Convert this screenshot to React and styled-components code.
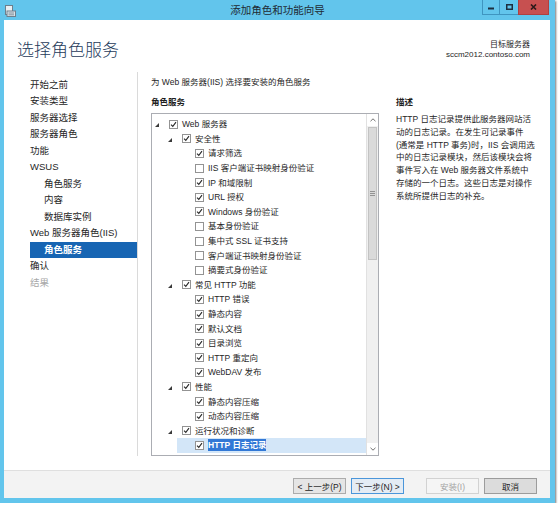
import styled, { createGlobalStyle } from "styled-components";

const GlobalStyle = createGlobalStyle`
  html, body { margin: 0; padding: 0; background: #fff; }
  body {
    font-family: "Liberation Sans", "Noto Sans CJK SC", sans-serif;
    color: #1e1e1e;
  }
`;

const Window = styled.div`
  width: 555px;
  height: 503px;
  box-sizing: border-box;
  background: #62c5ec;
  display: flex;
  flex-direction: column;
  box-shadow: 1px 1px 2px rgba(0, 0, 0, 0.55);
`;

const TitleBar = styled.div`
  height: 20px;
  display: grid;
  grid-template-columns: 1fr auto 1fr;
  align-items: start;
`;

const AppIcon = styled.div`
  margin: 3px 0 0 5px;
  width: 11px;
  height: 12px;
`;

const TitleText = styled.div`
  font-size: 10.5px;
  line-height: 20px;
  color: #1f2a33;
`;

const Captions = styled.div`
  justify-self: end;
  display: flex;
  margin-right: 6px;
`;

const CaptionButton = styled.div`
  width: ${(p) => p.w}px;
  height: 15px;
  box-sizing: border-box;
  display: flex;
  align-items: center;
  justify-content: center;
  background: ${(p) => (p.close ? "#c75050" : "#62c5ec")};
  border: 1px solid ${(p) => (p.close ? "#b04040" : "#3f95c0")};
  border-top: none;
  margin-left: -1px;
`;

const Client = styled.div`
  flex: 1;
  margin: 0 5px 5px 4px;
  background: #fff;
  display: flex;
  flex-direction: column;
  min-height: 0;
`;

const Header = styled.div`
  height: 52px;
  box-sizing: border-box;
  display: flex;
  justify-content: space-between;
  padding: 17px 20px 0 13px;
`;

const PageTitle = styled.div`
  font-family: "Noto Sans CJK SC", sans-serif;
  font-weight: 300;
  font-size: 17px;
  line-height: 24px;
  color: #1e3a5a;
`;

const Target = styled.div`
  text-align: right;
  font-size: 8px;
  line-height: 10px;
  padding-top: 2.5px;
  color: #1e1e1e;
`;

const Body = styled.div`
  flex: 1;
  display: flex;
  padding-bottom: 14px;
  min-height: 0;
`;

const Nav = styled.div`
  width: 134px;
  box-sizing: border-box;
  border-right: 1px solid #dadada;
  padding: 4.75px 0 0 26px;
`;

const NavItem = styled.div`
  height: 16.5px;
  line-height: 16.5px;
  font-size: 9.5px;
  white-space: nowrap;
  padding-left: ${(p) => (p.indent ? 14 : 0)}px;
  background: ${(p) => (p.active ? "#1765b3" : "transparent")};
  color: ${(p) => (p.active ? "#fff" : p.muted ? "#a8a8a8" : "#262626")};
  font-weight: ${(p) => (p.active ? "bold" : "normal")};
`;

const Content = styled.div`
  flex: 1;
  padding: 4px 0 0 13px;
`;

const Subtitle = styled.div`
  font-size: 8.5px;
  line-height: 12px;
  white-space: nowrap;
`;

const Columns = styled.div`
  display: flex;
  margin-top: 8px;
`;

const LeftCol = styled.div`
  width: 228px;
`;

const RightCol = styled.div`
  flex: 1;
  margin-left: 17px;
`;

const Heading = styled.div`
  font-size: 8.5px;
  line-height: 12px;
  font-weight: bold;
  margin-bottom: 5px;
`;

const TreeBox = styled.div`
  height: 343px;
  box-sizing: border-box;
  border: 1px solid #abadb3;
  display: flex;
  background: #fff;
`;

const TreeList = styled.div`
  flex: 1;
  overflow: hidden;
  padding-top: 3px;
`;

const Row = styled.div`
  height: 14.6px;
  display: flex;
  align-items: center;
  margin-left: ${(p) => p.level * 13 - 1}px;
  padding-left: 4px;
  background: ${(p) => (p.selected ? "#d3e6f8" : "transparent")};
`;

const Expander = styled.div`
  width: 14px;
  height: 100%;
  display: flex;
  align-items: center;
  padding-top: 2px;
  box-sizing: border-box;
`;

const Check = styled.div`
  width: 9px;
  height: 9px;
  box-sizing: border-box;
  border: 1px solid #939393;
  background: #fff;
  margin-right: 4px;
  display: flex;
  align-items: center;
  justify-content: center;
`;

const Label = styled.span`
  font-size: 8.5px;
  line-height: 12px;
  white-space: nowrap;
  color: ${(p) => (p.selected ? "#fff" : "#262626")};
  background: ${(p) => (p.selected ? "#3278d6" : "transparent")};
  font-weight: ${(p) => (p.selected ? "bold" : "normal")};
`;

const Scrollbar = styled.div`
  width: 11px;
  border-left: 1px solid #e1e1e1;
  background: #f0f0f0;
  display: flex;
  flex-direction: column;
`;

const ScrollArrow = styled.div`
  height: 12px;
  display: flex;
  align-items: center;
  justify-content: center;
  background: #fff;
`;

const Thumb = styled.div`
  height: 133px;
  margin: 1px 1px 0 1px;
  box-sizing: border-box;
  background: #dadada;
  border: 1px solid #c3c3c3;
  display: flex;
  align-items: center;
  justify-content: center;
`;

const Track = styled.div`
  flex: 1;
`;

const DescLine = styled.div`
  font-size: 8.5px;
  line-height: 12.8px;
  white-space: nowrap;
  color: #262626;
`;

const Footer = styled.div`
  height: 28px;
  box-sizing: border-box;
  border-top: 1px solid #dfdfdf;
  background: #f3f3f3;
  display: flex;
  justify-content: flex-end;
  align-items: flex-start;
  padding: 7px 13px 0 0;
  gap: 5px;
`;

const buttonColors = {
  normal: { bg: "#e5e5e5", border: "#acacac", color: "#1e1e1e" },
  primary: { bg: "#e4ecf4", border: "#4b96da", color: "#1e1e1e" },
  disabled: { bg: "#f5f5f5", border: "#d2d2d2", color: "#a3a3a3" },
  cancel: { bg: "#dcdcdc", border: "#9c9c9c", color: "#1e1e1e" },
};

const Button = styled.div`
  width: 53px;
  height: 16px;
  box-sizing: border-box;
  margin-left: ${(p) => (p.spaced ? 17 : 0)}px;
  display: flex;
  align-items: center;
  justify-content: center;
  font-size: 8.5px;
  white-space: nowrap;
  background: ${(p) => buttonColors[p.variant].bg};
  border: 1px solid ${(p) => buttonColors[p.variant].border};
  color: ${(p) => buttonColors[p.variant].color};
`;

const navItems = [
  { t: "开始之前" },
  { t: "安装类型" },
  { t: "服务器选择" },
  { t: "服务器角色" },
  { t: "功能" },
  { t: "WSUS" },
  { t: "角色服务", indent: true },
  { t: "内容", indent: true },
  { t: "数据库实例", indent: true },
  { t: "Web 服务器角色(IIS)" },
  { t: "角色服务", indent: true, active: true },
  { t: "确认" },
  { t: "结果", muted: true },
];

const tree = [
  [0, true, true, "Web 服务器"],
  [1, true, true, "安全性"],
  [2, false, true, "请求筛选"],
  [2, false, false, "IIS 客户端证书映射身份验证"],
  [2, false, true, "IP 和域限制"],
  [2, false, true, "URL 授权"],
  [2, false, true, "Windows 身份验证"],
  [2, false, false, "基本身份验证"],
  [2, false, false, "集中式 SSL 证书支持"],
  [2, false, false, "客户端证书映射身份验证"],
  [2, false, false, "摘要式身份验证"],
  [1, true, true, "常见 HTTP 功能"],
  [2, false, true, "HTTP 错误"],
  [2, false, true, "静态内容"],
  [2, false, true, "默认文档"],
  [2, false, true, "目录浏览"],
  [2, false, true, "HTTP 重定向"],
  [2, false, true, "WebDAV 发布"],
  [1, true, true, "性能"],
  [2, false, true, "静态内容压缩"],
  [2, false, true, "动态内容压缩"],
  [1, true, true, "运行状况和诊断"],
  [2, false, true, "HTTP 日志记录", true],
];

const description = [
  "HTTP 日志记录提供此服务器网站活",
  "动的日志记录。在发生可记录事件",
  "(通常是 HTTP 事务)时，IIS 会调用选",
  "中的日志记录模块，然后该模块会将",
  "事件写入在 Web 服务器文件系统中",
  "存储的一个日志。这些日志是对操作",
  "系统所提供日志的补充。",
];

const Triangle = () => (
  <svg width="4" height="4" viewBox="0 0 4 4">
    <polygon points="4,0 4,4 0,4" fill="#3a3a3a" />
  </svg>
);

const Tick = () => (
  <svg width="7" height="7" viewBox="0 0 7 7">
    <polyline points="1,3.6 2.8,5.4 6,1.2" fill="none" stroke="#2a2a2a" strokeWidth="1.1" />
  </svg>
);

const Chevron = ({ down }) => (
  <svg width="6" height="4" viewBox="0 0 6 4">
    <polyline
      points={down ? "0.5,0.8 3,3.2 5.5,0.8" : "0.5,3.2 3,0.8 5.5,3.2"}
      fill="none"
      stroke="#707070"
      strokeWidth="1"
    />
  </svg>
);

const Grip = () => (
  <svg width="5" height="5" viewBox="0 0 5 5">
    <path d="M0 0.5H5M0 2.5H5M0 4.5H5" stroke="#808080" strokeWidth="0.8" />
  </svg>
);

const WizardIcon = () => (
  <svg width="11" height="12" viewBox="0 0 11 12">
    <rect x="0.5" y="0.5" width="7" height="9" fill="#e8eef2" stroke="#6d7f8c" />
    <rect x="2" y="6" width="8.5" height="5.5" fill="#d9e2e8" stroke="#6d7f8c" />
    <path d="M3.5 8H9M3.5 9.8H9" stroke="#6d7f8c" strokeWidth="0.8" />
  </svg>
);

const App = () => {
  return (
    <>
      <GlobalStyle />
      <Window>
        <TitleBar>
          <AppIcon>
            <WizardIcon />
          </AppIcon>
          <TitleText>添加角色和功能向导</TitleText>
          <Captions>
            <CaptionButton w={18}>
              <svg width="6" height="6" viewBox="0 0 6 6">
                <rect x="0" y="3.5" width="6" height="2" fill="#1d2f3f" />
              </svg>
            </CaptionButton>
            <CaptionButton w={20}>
              <svg width="7" height="6" viewBox="0 0 7 6">
                <rect x="0.75" y="0.75" width="5.5" height="4.5" fill="none" stroke="#1d2f3f" strokeWidth="1.5" />
              </svg>
            </CaptionButton>
            <CaptionButton w={31} close>
              <svg width="7" height="6" viewBox="0 0 7 6">
                <path d="M1 0.5L6 5.5M6 0.5L1 5.5" stroke="#2a1a1a" strokeWidth="1.6" />
              </svg>
            </CaptionButton>
          </Captions>
        </TitleBar>
        <Client>
          <Header>
            <PageTitle>选择角色服务</PageTitle>
            <Target>
              <div>目标服务器</div>
              <div>sccm2012.contoso.com</div>
            </Target>
          </Header>
          <Body>
            <Nav>
              {navItems.map((n, i) => (
                <NavItem key={i} indent={n.indent} active={n.active} muted={n.muted}>
                  {n.t}
                </NavItem>
              ))}
            </Nav>
            <Content>
              <Subtitle>为 Web 服务器(IIS) 选择要安装的角色服务</Subtitle>
              <Columns>
                <LeftCol>
                  <Heading>角色服务</Heading>
                  <TreeBox>
                    <TreeList>
                      {tree.map(([level, expand, checked, text, selected], i) => (
                        <Row key={i} level={level} selected={selected}>
                          <Expander>{expand && <Triangle />}</Expander>
                          <Check>{checked && <Tick />}</Check>
                          <Label selected={selected}>{text}</Label>
                        </Row>
                      ))}
                    </TreeList>
                    <Scrollbar>
                      <ScrollArrow>
                        <Chevron />
                      </ScrollArrow>
                      <Thumb>
                        <Grip />
                      </Thumb>
                      <Track />
                      <ScrollArrow>
                        <Chevron down />
                      </ScrollArrow>
                    </Scrollbar>
                  </TreeBox>
                </LeftCol>
                <RightCol>
                  <Heading>描述</Heading>
                  {description.map((l, i) => (
                    <DescLine key={i}>{l}</DescLine>
                  ))}
                </RightCol>
              </Columns>
            </Content>
          </Body>
          <Footer>
            <Button variant="normal">&lt; 上一步(P)</Button>
            <Button variant="primary">下一步(N) &gt;</Button>
            <Button variant="disabled" spaced>安装(I)</Button>
            <Button variant="cancel">取消</Button>
          </Footer>
        </Client>
      </Window>
    </>
  );
};

export default App;
